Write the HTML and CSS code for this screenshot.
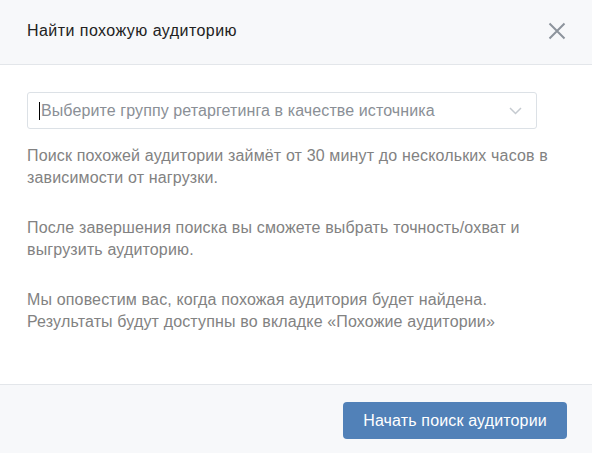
FILE: index.html
```html
<!DOCTYPE html>
<html lang="ru">
<head>
<meta charset="utf-8">
<link rel="stylesheet" href="styles.css">
</head>
<body>
<div class="modal">
  <div class="header">
    <div class="title">Найти похожую аудиторию</div>
    <button class="close" aria-label="Закрыть">
      <svg width="18" height="18" viewBox="0 0 18 18"><path d="M1.5 1.5 L16.5 16.5 M16.5 1.5 L1.5 16.5" stroke="#8d949c" stroke-width="2" fill="none"/></svg>
    </button>
  </div>
  <div class="content">
    <div class="select">
      <span class="caret"></span>
      <span class="placeholder">Выберите группу ретаргетинга в качестве источника</span>
      <svg class="chevron" width="13" height="8" viewBox="0 0 13 8"><path d="M1 1 L6.5 6.5 L12 1" stroke="#c5cad0" stroke-width="1.5" fill="none"/></svg>
    </div>
    <p class="text">Поиск похожей аудитории займёт от 30 минут до нескольких часов в зависимости от нагрузки.</p>
    <p class="text">После завершения поиска вы сможете выбрать точность/охват и выгрузить аудиторию.</p>
    <p class="text">Мы оповестим вас, когда похожая аудитория будет найдена.<br>Результаты будут доступны во вкладке «Похожие аудитории»</p>
  </div>
  <div class="footer">
    <button class="primary">Начать поиск аудитории</button>
  </div>
</div>
</body>
</html>
```
FILE: styles.css
```css
html, body {
  margin: 0;
  padding: 0;
  background: #ffffff;
  font-family: "Liberation Sans", Arial, sans-serif;
}
.modal {
  width: 592px;
  height: 453px;
  display: flex;
  flex-direction: column;
}
.header {
  flex: none;
  height: 65px;
  box-sizing: border-box;
  background: #f7f8fa;
  border-bottom: 1px solid #e3e6ea;
  display: flex;
  align-items: center;
  justify-content: space-between;
  padding: 0 26px 0 27px;
}
.title {
  font-size: 16px;
  letter-spacing: 0.45px;
  color: #222222;
  margin-top: -2px;
}
.close {
  border: 0;
  background: none;
  padding: 0;
  width: 18px;
  height: 18px;
  display: flex;
  margin-top: -2px;
}
.content {
  flex: 1;
  padding: 27px 27px 0 27px;
}
.select {
  width: 510px;
  height: 37px;
  box-sizing: border-box;
  border: 1px solid #dce1e6;
  border-radius: 3px;
  display: flex;
  align-items: center;
  padding: 0 14px 0 11px;
}
.caret {
  width: 1px;
  height: 18px;
  background: #000;
  margin-right: 1px;
}
.placeholder {
  flex: 1;
  font-size: 16px;
  letter-spacing: 0.1px;
  color: #8a8f96;
}
.chevron {
  margin-top: 1px;
}
.text {
  margin: 16px 0 0 0;
  font-size: 16px;
  letter-spacing: 0.15px;
  line-height: 22px;
  color: #828282;
}
.text + .text {
  margin-top: 28px;
}
.footer {
  flex: none;
  height: 69px;
  box-sizing: border-box;
  background: #f7f8fa;
  border-top: 1px solid #e3e6ea;
  display: flex;
  justify-content: flex-end;
  padding: 17px 25px 0 0;
}
.primary {
  width: 224px;
  height: 37px;
  border: 0;
  border-radius: 4px;
  background: #5181b8;
  color: #ffffff;
  font-family: "Liberation Sans", Arial, sans-serif;
  font-size: 16px;
  letter-spacing: 0.15px;
}
```
